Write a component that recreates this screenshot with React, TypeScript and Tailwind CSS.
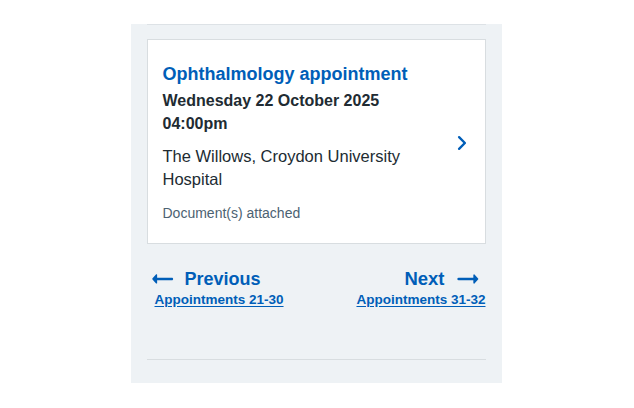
const ArrowLeft = () => (
  <svg className="w-8 h-8 shrink-0 fill-[#005eb8]" viewBox="0 0 24 24" aria-hidden="true">
    <path d="M4.1 12.3l2.7 3c.2.2.5.2.7 0 .1-.1.1-.2.1-.3v-2h11c.6 0 1-.4 1-1s-.4-1-1-1h-11V9c0-.2-.1-.4-.3-.5h-.2c-.1 0-.3.1-.4.2l-2.7 3c0 .2 0 .4.1.6z" />
  </svg>
);

const ArrowRight = () => (
  <svg className="w-8 h-8 shrink-0 fill-[#005eb8]" viewBox="0 0 24 24" aria-hidden="true">
    <path d="M19.6 11.66l-2.73-3A.51.51 0 0 0 16 9v2H5a1 1 0 0 0 0 2h11v2a.5.5 0 0 0 .3.46.5.5 0 0 0 .55-.11l2.73-3a.5.5 0 0 0 .02-.69z" />
  </svg>
);

const Chevron = () => (
  <svg className="w-7 h-7 shrink-0 fill-[#005eb8]" viewBox="0 0 24 24" aria-hidden="true">
    <path d="M15.5 12a1 1 0 0 1-.29.71l-5 5a1 1 0 0 1-1.42-1.42l4.3-4.29-4.3-4.29a1 1 0 0 1 1.42-1.42l5 5a1 1 0 0 1 .29.71z" />
  </svg>
);

function App() {
  return (
    <div className="min-h-screen bg-white flex justify-center pt-[24px] font-['Liberation_Sans',Arial,sans-serif] text-[#212b32]">
      <div className="w-[371px] h-[359px] -translate-x-px bg-[#eef2f5] px-4">
        <div className="h-px bg-[#dde2e6]" />

        <a className="mt-[14px] flex items-center bg-white border border-[#d8dde0] pl-[15px] pr-[9px] pt-[22px] pb-[20px] cursor-pointer">
          <div className="flex-1">
            <h2 className="text-[18px] leading-[24px] font-bold text-[#005eb8] mb-[3px]">
              Ophthalmology appointment
            </h2>
            <p className="text-[16px] leading-[23px] font-bold">Wednesday 22 October 2025</p>
            <p className="text-[16px] leading-[23px] font-bold">04:00pm</p>
            <p className="mt-[10px] text-[16.5px] leading-[23px] w-[270px]">
              The Willows, Croydon University Hospital
            </p>
            <p className="mt-[12px] text-[14px] leading-[20px] text-[#4c6272]">Document(s) attached</p>
          </div>
          <Chevron />
        </a>

        <nav className="mt-[24px] flex justify-between text-[#005eb8]">
          <a className="flex flex-col items-start cursor-pointer">
            <span className="flex items-center h-[22px]">
              <ArrowLeft />
              <span className="ml-[6px] text-[18px] leading-[22px] font-bold">Previous</span>
            </span>
            <span className="pl-2 text-[13.5px] leading-[20px] font-bold underline underline-offset-2">
              Appointments 21-30
            </span>
          </a>
          <a className="flex flex-col items-end cursor-pointer">
            <span className="flex items-center h-[22px] mr-[2px]">
              <span className="mr-[7px] text-[18.5px] leading-[22px] font-bold">Next</span>
              <ArrowRight />
            </span>
            <span className="text-[13.5px] leading-[20px] font-bold underline underline-offset-2">
              Appointments 31-32
            </span>
          </a>
        </nav>

        <div className="mt-[49px] h-px bg-[#d8dde0]" />
      </div>
    </div>
  );
}

export default App;
